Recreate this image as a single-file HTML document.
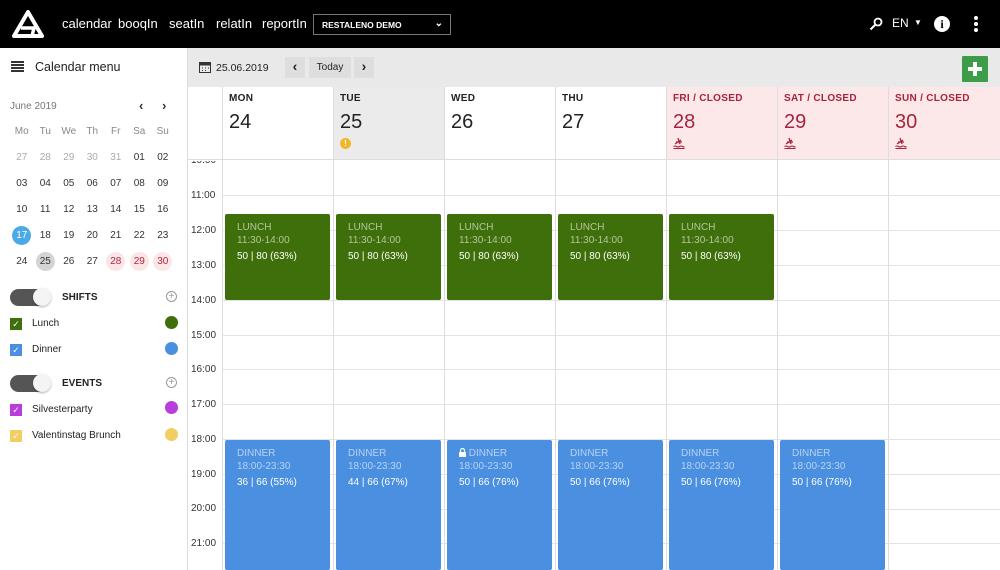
<!DOCTYPE html>
<html><head><meta charset="utf-8"><style>
*{box-sizing:border-box;margin:0;padding:0}
body{width:1000px;height:570px;overflow:hidden;font-family:"Liberation Sans",sans-serif;background:#fff;position:relative;color:#222}
.abs{position:absolute}
.top{left:0;top:0;width:1000px;height:48px;background:#000;color:#fff}
.nav{font-size:13px;top:16px}
.side{left:0;top:48px;width:188px;height:522px;background:#fff;border-right:1px solid #ddd}
.cal td{width:23.5px;height:26px;text-align:center;font-size:10px;color:#333}
.tb{left:188px;top:48px;width:812px;height:39px;background:#e9e9e9}
.col{top:87px;width:111px;height:483px;border-left:1px solid #ddd}
.hd{height:73px;border-bottom:1px solid #ddd;padding:6px 0 0 6px}
.dn{font-size:10px;font-weight:bold;letter-spacing:.3px}
.dd{font-size:20px;margin-top:7px;line-height:22px}
.hl{left:222px;width:778px;height:1px;background:#e3e3e3}
.tl{left:191px;font-size:10px;color:#333;line-height:12px}
.blk{border-radius:2px;padding:7px 12px;font-size:10px;line-height:13px;color:#fff}
.blk .a{opacity:.6}
.g{background:#3f6f0a}.b{background:#4a8fe0}
.closed{background:#fde8e9;color:#a8233c}
.umb{display:block;margin-top:4px}
.sl{font-size:10px}
</style></head><body>
<div class="abs top">
 <svg class="abs" style="left:12px;top:10px" width="32" height="28" viewBox="0 0 32 28"><path d="M16 2 L30 26 L2 26 Z" fill="none" stroke="#fff" stroke-width="4" stroke-linejoin="round"/><path d="M9 18 H22 L20 26" fill="none" stroke="#fff" stroke-width="3.5"/></svg>
 <span class="abs nav" style="left:62px">calendar</span>
 <span class="abs nav" style="left:118px">booqIn</span>
 <span class="abs nav" style="left:169px">seatIn</span>
 <span class="abs nav" style="left:216px">relatIn</span>
 <span class="abs nav" style="left:262px">reportIn</span>
 <div class="abs" style="left:313px;top:14px;width:138px;height:21px;border:1px solid #777;font-size:8.5px;padding:5px 8px;font-weight:bold">RESTALENO DEMO<span class="abs" style="right:7px;top:3px;font-size:10px">⌄</span></div>
 <svg class="abs" style="left:869px;top:17px" width="14" height="14"><circle cx="9" cy="5" r="3.5" fill="none" stroke="#fff" stroke-width="1.8"/><path d="M6.5 7.5 L1.5 12.5" stroke="#fff" stroke-width="2"/></svg>
 <span class="abs" style="left:892px;top:16px;font-size:12px">EN</span>
 <span class="abs" style="left:914px;top:18px;font-size:8px">▼</span>
 <div class="abs" style="left:934px;top:16px;width:16px;height:16px;border-radius:50%;background:#fff;color:#000;font-size:12px;font-weight:bold;text-align:center;line-height:16px;font-family:'Liberation Serif',serif">i</div>
 <div class="abs" style="left:974px;top:16px;width:4px;height:4px;border-radius:50%;background:#fff;box-shadow:0 6px 0 #fff,0 12px 0 #fff"></div>
</div>

<div class="abs side">
 <div class="abs" style="left:11px;top:13px;width:13px;height:2px;background:#333;box-shadow:0 3px 0 #333,0 6px 0 #333,0 9px 0 #333"></div>
 <span class="abs" style="left:35px;top:12px;font-size:12.5px;color:#222">Calendar menu</span>
 <span class="abs" style="left:10px;top:53px;font-size:10px;color:#777">June 2019</span>
 <span class="abs" style="left:139px;top:50px;font-size:13px;color:#333;font-weight:bold">‹</span>
 <span class="abs" style="left:162px;top:50px;font-size:13px;color:#333;font-weight:bold">›</span>
 <table class="abs cal" style="left:10px;top:70px;border-collapse:collapse">
 <tr><td style="color:#888">Mo</td><td style="color:#888">Tu</td><td style="color:#888">We</td><td style="color:#888">Th</td><td style="color:#888">Fr</td><td style="color:#888">Sa</td><td style="color:#888">Su</td></tr>
 <tr><td style="color:#aaa">27</td><td style="color:#aaa">28</td><td style="color:#aaa">29</td><td style="color:#aaa">30</td><td style="color:#aaa">31</td><td>01</td><td>02</td></tr>
 <tr><td>03</td><td>04</td><td>05</td><td>06</td><td>07</td><td>08</td><td>09</td></tr>
 <tr><td>10</td><td>11</td><td>12</td><td>13</td><td>14</td><td>15</td><td>16</td></tr>
 <tr><td><span style="display:inline-block;width:19px;height:19px;border-radius:50%;background:#4aaae8;color:#fff;line-height:19px">17</span></td><td>18</td><td>19</td><td>20</td><td>21</td><td>22</td><td>23</td></tr>
 <tr><td>24</td><td><span style="display:inline-block;width:19px;height:19px;border-radius:50%;background:#d4d4d4;line-height:19px">25</span></td><td>26</td><td>27</td>
 <td><span style="display:inline-block;width:19px;height:19px;border-radius:50%;background:#fbe5e7;color:#b3263f;line-height:19px">28</span></td><td><span style="display:inline-block;width:19px;height:19px;border-radius:50%;background:#fbe5e7;color:#b3263f;line-height:19px">29</span></td><td><span style="display:inline-block;width:19px;height:19px;border-radius:50%;background:#fbe5e7;color:#b3263f;line-height:19px">30</span></td></tr>
 </table>
 <div class="abs" style="left:10px;top:241px;width:40px;height:17px;border-radius:9px;background:#555"></div>
 <div class="abs" style="left:33px;top:240px;width:18px;height:18px;border-radius:50%;background:#f4f4f4;box-shadow:0 1px 2px rgba(0,0,0,.3)"></div>
 <span class="abs" style="left:62px;top:244px;font-size:10px;font-weight:bold">SHIFTS</span>
 <div class="abs" style="left:166px;top:243px;width:11px;height:11px;border-radius:50%;border:1px solid #999;font-size:10px;line-height:9px;text-align:center;color:#999">+</div>
 <div class="abs" style="left:10px;top:270px;width:12px;height:12px;background:#3f6f0a;color:#fff;font-size:9px;text-align:center;line-height:12px">✓</div>
 <span class="abs sl" style="left:32px;top:270px">Lunch</span>
 <div class="abs" style="left:165px;top:268px;width:13px;height:13px;border-radius:50%;background:#3f6f0a"></div>
 <div class="abs" style="left:10px;top:296px;width:12px;height:12px;background:#4a8fe0;color:#fff;font-size:9px;text-align:center;line-height:12px">✓</div>
 <span class="abs sl" style="left:32px;top:296px">Dinner</span>
 <div class="abs" style="left:165px;top:294px;width:13px;height:13px;border-radius:50%;background:#4a8fe0"></div>
 <div class="abs" style="left:10px;top:327px;width:40px;height:17px;border-radius:9px;background:#555"></div>
 <div class="abs" style="left:33px;top:326px;width:18px;height:18px;border-radius:50%;background:#f4f4f4;box-shadow:0 1px 2px rgba(0,0,0,.3)"></div>
 <span class="abs" style="left:62px;top:330px;font-size:10px;font-weight:bold">EVENTS</span>
 <div class="abs" style="left:166px;top:329px;width:11px;height:11px;border-radius:50%;border:1px solid #999;font-size:10px;line-height:9px;text-align:center;color:#999">+</div>
 <div class="abs" style="left:10px;top:356px;width:12px;height:12px;background:#b93ddb;color:#fff;font-size:9px;text-align:center;line-height:12px">✓</div>
 <span class="abs sl" style="left:32px;top:356px">Silvesterparty</span>
 <div class="abs" style="left:165px;top:353px;width:13px;height:13px;border-radius:50%;background:#b93ddb"></div>
 <div class="abs" style="left:10px;top:382px;width:12px;height:12px;background:#f3cd62;color:#fff;font-size:9px;text-align:center;line-height:12px">✓</div>
 <span class="abs sl" style="left:32px;top:382px">Valentinstag Brunch</span>
 <div class="abs" style="left:165px;top:380px;width:13px;height:13px;border-radius:50%;background:#f3cd62"></div>
</div>

<div class="abs tb">
 <svg class="abs" style="left:11px;top:13px" width="12" height="12"><rect x="0.5" y="1.5" width="11" height="10" fill="none" stroke="#333"/><rect x="0.5" y="1.5" width="11" height="3" fill="#333"/><path d="M3 7h1M6 7h1M9 7h1M3 9.5h1M6 9.5h1" stroke="#333"/></svg>
 <span class="abs" style="left:28px;top:14px;font-size:10.5px">25.06.2019</span>
 <div class="abs" style="left:97px;top:9px;width:20px;height:21px;background:#dedede;text-align:center;font-size:14px;font-weight:bold;line-height:19px">‹</div>
 <div class="abs" style="left:121px;top:9px;width:42px;height:21px;background:#dedede;text-align:center;font-size:10px;line-height:21px">Today</div>
 <div class="abs" style="left:166px;top:9px;width:20px;height:21px;background:#dedede;text-align:center;font-size:14px;font-weight:bold;line-height:19px">›</div>
 <div class="abs" style="left:774px;top:8px;width:26px;height:26px;background:#3c9c48;border-radius:1px"><div class="abs" style="left:6px;top:11px;width:14px;height:4px;background:#fff"></div><div class="abs" style="left:11px;top:6px;width:4px;height:14px;background:#fff"></div></div>
</div>

<div class="abs" style="left:188px;top:87px;width:34px;height:73px;border-bottom:1px solid #ddd;background:#fff"></div>

<div class="abs col" style="left:222px"><div class="hd"><div class="dn">MON</div><div class="dd">24</div></div></div>
<div class="abs col" style="left:333px"><div class="hd" style="background:#ebebeb"><div class="dn">TUE</div><div class="dd">25</div><div style="width:11px;height:11px;border-radius:50%;background:#efb72a;color:#fff;font-size:8px;text-align:center;line-height:11px;margin-top:5px;font-weight:bold">!</div></div></div>
<div class="abs col" style="left:444px"><div class="hd"><div class="dn">WED</div><div class="dd">26</div></div></div>
<div class="abs col" style="left:555px"><div class="hd"><div class="dn">THU</div><div class="dd">27</div></div></div>
<div class="abs col" style="left:666px"><div class="hd closed"><div class="dn">FRI / CLOSED</div><div class="dd">28</div><svg class="umb" width="12" height="12" viewBox="0 0 12 12"><path d="M2 7 L8 3 M5 1 L7 7 M3 5 H9" stroke="#a8233c" stroke-width="1.3" fill="none"/><path d="M0.5 9.5 q1.5 -1 3 0 t3 0 t3 0 t2 0 M0.5 11.5 H11.5" stroke="#a8233c" stroke-width="1.1" fill="none"/></svg></div></div>
<div class="abs col" style="left:777px"><div class="hd closed"><div class="dn">SAT / CLOSED</div><div class="dd">29</div><svg class="umb" width="12" height="12" viewBox="0 0 12 12"><path d="M2 7 L8 3 M5 1 L7 7 M3 5 H9" stroke="#a8233c" stroke-width="1.3" fill="none"/><path d="M0.5 9.5 q1.5 -1 3 0 t3 0 t3 0 t2 0 M0.5 11.5 H11.5" stroke="#a8233c" stroke-width="1.1" fill="none"/></svg></div></div>
<div class="abs col" style="left:888px;width:112px"><div class="hd closed"><div class="dn">SUN / CLOSED</div><div class="dd">30</div><svg class="umb" width="12" height="12" viewBox="0 0 12 12"><path d="M2 7 L8 3 M5 1 L7 7 M3 5 H9" stroke="#a8233c" stroke-width="1.3" fill="none"/><path d="M0.5 9.5 q1.5 -1 3 0 t3 0 t3 0 t2 0 M0.5 11.5 H11.5" stroke="#a8233c" stroke-width="1.1" fill="none"/></svg></div></div>

<div class="abs hl" style="top:195px"></div><div class="abs hl" style="top:230px"></div><div class="abs hl" style="top:265px"></div>
<div class="abs hl" style="top:300px"></div><div class="abs hl" style="top:335px"></div><div class="abs hl" style="top:369px"></div>
<div class="abs hl" style="top:404px"></div><div class="abs hl" style="top:439px"></div><div class="abs hl" style="top:474px"></div>
<div class="abs hl" style="top:509px"></div><div class="abs hl" style="top:543px"></div>

<div class="abs" style="left:188px;top:161px;width:34px;height:6px;overflow:hidden"><span class="abs tl" style="left:3px;top:-6px">10:00</span></div>
<span class="abs tl" style="top:190px">11:00</span><span class="abs tl" style="top:225px">12:00</span><span class="abs tl" style="top:260px">13:00</span>
<span class="abs tl" style="top:295px">14:00</span><span class="abs tl" style="top:330px">15:00</span><span class="abs tl" style="top:364px">16:00</span>
<span class="abs tl" style="top:399px">17:00</span><span class="abs tl" style="top:434px">18:00</span><span class="abs tl" style="top:469px">19:00</span>
<span class="abs tl" style="top:503px">20:00</span><span class="abs tl" style="top:538px">21:00</span>

<div class="abs blk g" style="left:225px;top:214px;width:105px;height:86px"><div class="a">LUNCH</div><div class="a">11:30-14:00</div><div style="margin-top:3px">50 | 80 (63%)</div></div>
<div class="abs blk g" style="left:336px;top:214px;width:105px;height:86px"><div class="a">LUNCH</div><div class="a">11:30-14:00</div><div style="margin-top:3px">50 | 80 (63%)</div></div>
<div class="abs blk g" style="left:447px;top:214px;width:105px;height:86px"><div class="a">LUNCH</div><div class="a">11:30-14:00</div><div style="margin-top:3px">50 | 80 (63%)</div></div>
<div class="abs blk g" style="left:558px;top:214px;width:105px;height:86px"><div class="a">LUNCH</div><div class="a">11:30-14:00</div><div style="margin-top:3px">50 | 80 (63%)</div></div>
<div class="abs blk g" style="left:669px;top:214px;width:105px;height:86px"><div class="a">LUNCH</div><div class="a">11:30-14:00</div><div style="margin-top:3px">50 | 80 (63%)</div></div>

<div class="abs blk b" style="left:225px;top:440px;width:105px;height:130px"><div class="a">DINNER</div><div class="a">18:00-23:30</div><div style="margin-top:3px">36 | 66 (55%)</div></div>
<div class="abs blk b" style="left:336px;top:440px;width:105px;height:130px"><div class="a">DINNER</div><div class="a">18:00-23:30</div><div style="margin-top:3px">44 | 66 (67%)</div></div>
<div class="abs blk b" style="left:447px;top:440px;width:105px;height:130px"><div><svg width="7" height="9" viewBox="0 0 7 9" style="vertical-align:-1px"><path d="M1.5 4 V2.5 a2 2 0 0 1 4 0 V4" fill="none" stroke="#fff" stroke-width="1.2"/><rect x="0" y="4" width="7" height="5" rx="0.5" fill="#fff"/></svg><span class="a"> DINNER</span></div><div class="a">18:00-23:30</div><div style="margin-top:3px">50 | 66 (76%)</div></div>
<div class="abs blk b" style="left:558px;top:440px;width:105px;height:130px"><div class="a">DINNER</div><div class="a">18:00-23:30</div><div style="margin-top:3px">50 | 66 (76%)</div></div>
<div class="abs blk b" style="left:669px;top:440px;width:105px;height:130px"><div class="a">DINNER</div><div class="a">18:00-23:30</div><div style="margin-top:3px">50 | 66 (76%)</div></div>
<div class="abs blk b" style="left:780px;top:440px;width:105px;height:130px"><div class="a">DINNER</div><div class="a">18:00-23:30</div><div style="margin-top:3px">50 | 66 (76%)</div></div>
</body></html>
